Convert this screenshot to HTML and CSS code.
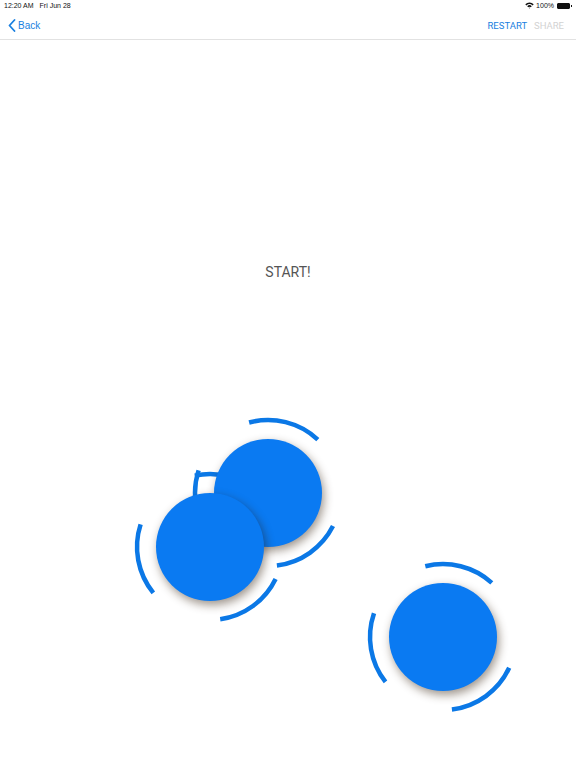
FILE: index.html
```html
<!DOCTYPE html>
<html lang="en">
<head>
    <meta charset="UTF-8">
    <meta name="viewport" content="width=device-width, initial-scale=1.0">
    <title>Tap Game</title>
    <link rel="stylesheet" href="styles.css">
</head>
<body>

<div class="status-bar">
    <div class="status-left">
        <span>12:20 AM</span>
        <span>Fri Jun 28</span>
    </div>
    <div class="status-right">
        <svg class="wifi" width="9" height="7" viewBox="0 0 9 7">
            <path d="M0.3 2.3 A6 6 0 0 1 8.7 2.3 L7.6 3.4 A4.5 4.5 0 0 0 1.4 3.4 Z" fill="#111"/>
            <path d="M2.2 4.2 A3.3 3.3 0 0 1 6.8 4.2 L5.7 5.3 A1.8 1.8 0 0 0 3.3 5.3 Z" fill="#111"/>
            <path d="M3.9 6 L4.5 5.4 L5.1 6 L4.5 6.6 Z" fill="#111"/>
        </svg>
        <span>100%</span>
        <div class="battery"><div class="battery-level"></div></div>
    </div>
</div>

<nav class="nav-bar">
    <a class="back-btn" href="#">
        <svg width="8" height="13" viewBox="0 0 8 13">
            <path d="M6.5 1 L1.5 6.5 L6.5 12" fill="none" stroke="#1a7fe0" stroke-width="1.8" stroke-linecap="round" stroke-linejoin="round"/>
        </svg>
        Back
    </a>
    <div class="nav-actions">
        <a class="nav-btn" href="#">RESTART</a>
        <a class="nav-btn disabled" href="#">SHARE</a>
    </div>
</nav>

<main class="stage">
    <div class="start-label">START!</div>

    <!-- targets: rings first so every ball sits above all the rings -->
    <svg class="field" viewBox="0 40 576 728">
        <g class="ring">
            <path d="M249.1 422.5 A73 73 0 0 1 317.8 439.6"/>
            <path d="M333.0 526.1 A73 73 0 0 1 276.9 565.5"/>
            <path d="M210.5 537.9 A73 73 0 0 1 198.6 470.4"/>

            <path d="M194.8 475.6 A73 73 0 0 1 259.8 493.6"/>
            <path d="M275.6 579.0 A73 73 0 0 1 220.2 619.3"/>
            <path d="M153.3 592.9 A73 73 0 0 1 140.6 524.4"/>

            <path d="M425.3 566.2 A73 73 0 0 1 491.8 582.8"/>
            <path d="M509.2 667.8 A73 73 0 0 1 451.9 709.5"/>
            <path d="M385.5 681.9 A73 73 0 0 1 374.0 613.2"/>
        </g>
        <circle class="ball" cx="268" cy="493" r="54"/>
        <circle class="ball" cx="210" cy="547" r="54"/>
        <circle class="ball" cx="443" cy="637" r="54"/>
    </svg>
</main>

</body>
</html>
```

FILE: styles.css
```css
body {
    font-family: "Liberation Sans", Arial, sans-serif;
    margin: 0;
    padding: 0;
    background-color: #fff;
    width: 576px;
    height: 768px;
    overflow: hidden;
}
.status-bar {
    display: flex;
    justify-content: space-between;
    align-items: center;
    height: 11px;
    padding: 0 4px;
    font-size: 7px;
    color: #111;
}
.status-left {
    display: flex;
    gap: 6px;
}
.status-right {
    display: flex;
    align-items: center;
    gap: 2px;
}
.battery {
    width: 11px;
    height: 4px;
    border: 1px solid #111;
    border-radius: 1px;
    position: relative;
    margin-left: 1px;
    margin-right: 2px;
}
.battery::after {
    content: "";
    position: absolute;
    right: -3px;
    top: 1px;
    width: 1px;
    height: 2px;
    background-color: #111;
}
.battery-level {
    width: 100%;
    height: 100%;
    background-color: #111;
}
.nav-bar {
    display: flex;
    justify-content: space-between;
    align-items: center;
    height: 28px;
    padding: 0 12px 0 8px;
    border-bottom: 1px solid #e2e2e2;
}
.nav-bar a {
    text-decoration: none;
}
.back-btn {
    display: flex;
    align-items: center;
    gap: 2px;
    color: #1a7fe0;
    font-size: 10px;
}
.nav-actions {
    display: flex;
    gap: 7px;
}
.nav-btn {
    color: #1a7fe0;
    font-family: Roboto, "Liberation Sans", sans-serif;
    font-size: 9.5px;
}
.nav-btn.disabled {
    color: #d2d2d2;
}
.stage {
    position: relative;
    height: 728px;
}
.start-label {
    padding-top: 224px;
    text-align: center;
    font-family: Roboto, "Liberation Sans", sans-serif;
    font-size: 14px;
    color: #555;
}
.field {
    position: absolute;
    left: 0;
    top: 0;
    width: 576px;
    height: 728px;
}
.ring path {
    fill: none;
    stroke: #0b78e6;
    stroke-width: 4.5;
}
.ball {
    fill: #0a7af2;
    filter: drop-shadow(2px 4px 5px rgba(40, 20, 0, 0.45));
}
```
